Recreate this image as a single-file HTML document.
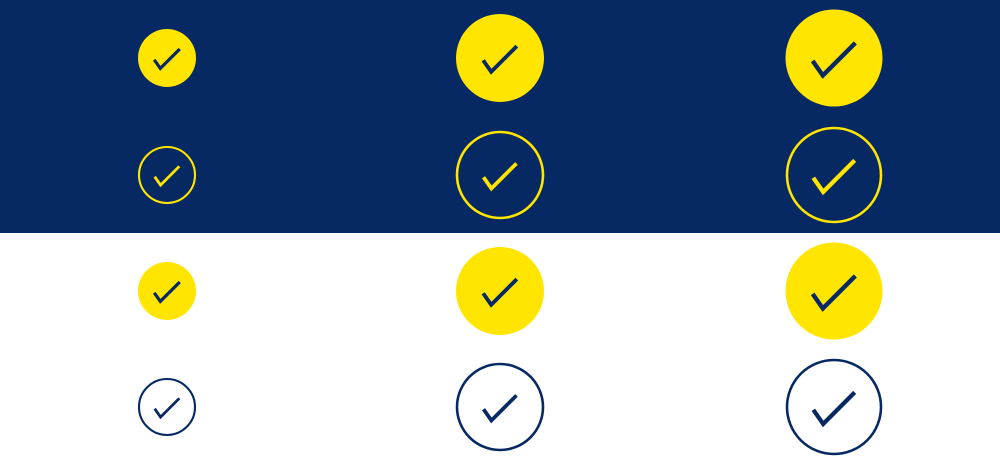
<!DOCTYPE html>
<html><head><style>
html,body{margin:0;padding:0;width:1000px;height:466px;overflow:hidden;background:#fff}
</style></head><body>
<svg width="1000" height="466" xmlns="http://www.w3.org/2000/svg">
<rect x="0" y="0" width="1000" height="233" fill="#062863"/>
<defs>
<polyline id="ck" points="-0.44,0.06 -0.23,0.36 0.44,-0.31" fill="none" stroke-linecap="butt" stroke-linejoin="miter"/>
</defs>
<!-- row 1 -->
<g transform="translate(167,58) scale(29)"><circle r="1" fill="#FFE500"/><use href="#ck" stroke="#062863" stroke-width="0.11"/></g>
<g transform="translate(500,58) scale(44)"><circle r="1" fill="#FFE500"/><use href="#ck" transform="scale(0.87)" stroke="#062863" stroke-width="0.1"/></g>
<g transform="translate(834,58) scale(48.5)"><circle r="1" fill="#FFE500"/><use href="#ck" stroke="#062863" stroke-width="0.09"/></g>
<!-- row 2 -->
<g transform="translate(167,175) scale(28)"><circle r="1" fill="none" stroke="#FFE500" stroke-width="0.075"/><use href="#ck" stroke="#FFE500" stroke-width="0.1"/></g>
<g transform="translate(500,175) scale(43)"><circle r="1" fill="none" stroke="#FFE500" stroke-width="0.06"/><use href="#ck" transform="scale(0.87)" stroke="#FFE500" stroke-width="0.1"/></g>
<g transform="translate(834,175) scale(47)"><circle r="1" fill="none" stroke="#FFE500" stroke-width="0.055"/><use href="#ck" stroke="#FFE500" stroke-width="0.09"/></g>
<!-- row 3 -->
<g transform="translate(167,291) scale(29)"><circle r="1" fill="#FFE500"/><use href="#ck" stroke="#062863" stroke-width="0.11"/></g>
<g transform="translate(500,291) scale(44)"><circle r="1" fill="#FFE500"/><use href="#ck" transform="scale(0.87)" stroke="#062863" stroke-width="0.1"/></g>
<g transform="translate(834,291) scale(48.5)"><circle r="1" fill="#FFE500"/><use href="#ck" stroke="#062863" stroke-width="0.09"/></g>
<!-- row 4 -->
<g transform="translate(167,407) scale(28)"><circle r="1" fill="none" stroke="#062863" stroke-width="0.075"/><use href="#ck" stroke="#062863" stroke-width="0.1"/></g>
<g transform="translate(500,407) scale(43)"><circle r="1" fill="none" stroke="#062863" stroke-width="0.06"/><use href="#ck" transform="scale(0.87)" stroke="#062863" stroke-width="0.1"/></g>
<g transform="translate(834,407) scale(47)"><circle r="1" fill="none" stroke="#062863" stroke-width="0.055"/><use href="#ck" stroke="#062863" stroke-width="0.09"/></g>
</svg>
</body></html>
